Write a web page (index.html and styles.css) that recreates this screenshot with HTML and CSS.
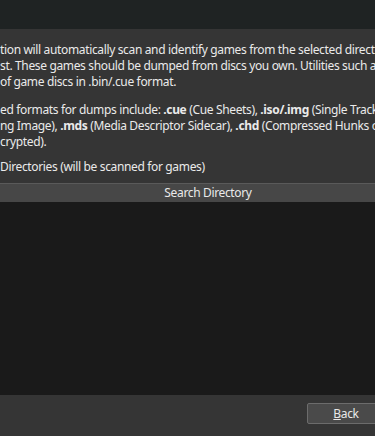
FILE: index.html
```html
<!DOCTYPE html>
<html lang="en">
<head>
  <meta charset="UTF-8" />
  <meta name="viewport" content="width=device-width, initial-scale=1.0" />
  <title>Setup Wizard - Game Directories</title>
  <link rel="stylesheet" href="styles.css">
</head>
<body>
  <div class="titlebar"></div>

  <div class="page">
    <p class="intro">
      <span class="line">tion will automatically scan and identify games from the selected directories below</span>
      <span class="line">st. These games should be dumped from discs you own. Utilities such as ImgBurn</span>
      <span class="line">of game discs in .bin/.cue format.</span>
    </p>

    <p class="intro formats">
      <span class="line">ed formats for dumps include: <b>.cue</b> (Cue Sheets), <b>.iso/.img</b> (Single Track Image)</span>
      <span class="line">ng Image), <b>.mds</b> (Media Descriptor Sidecar), <b>.chd</b> (Compressed Hunks of Data)</span>
      <span class="line">crypted).</span>
    </p>

    <div class="label">Directories (will be scanned for games)</div>

    <div class="dir-list">
      <div class="dir-header">Search Directory</div>
      <div class="dir-body"></div>
    </div>

    <div class="buttons">
      <button class="btn"><u>B</u>ack</button>
    </div>
  </div>
</body>
</html>
```

FILE: styles.css
```css
* {
  margin: 0;
  padding: 0;
  box-sizing: border-box;
}

html, body {
  height: 100%;
  overflow: hidden;
}

body {
  font-family: "Noto Sans", "Open Sans", sans-serif;
  font-size: 12px;
  line-height: 16px;
  letter-spacing: -0.35px;
  color: #eaeaea;
  background-color: #353535;
}

.titlebar {
  height: 29px;
  background-color: #1f2323;
}

.page {
  padding-top: 13px;
}

.intro {
  margin-bottom: 12px;
}

.intro.formats {
  margin-bottom: 9px;
}

.line {
  display: block;
  white-space: nowrap;
  overflow: hidden;
}

.intro b {
  font-weight: 700;
}

.label {
  white-space: nowrap;
  margin-bottom: 8px;
}

.dir-list {
  margin-right: -41px;
}

.dir-header {
  height: 19px;
  line-height: 18px;
  text-align: center;
  background-color: #474747;
  border-top: 1px solid #5a5a5a;
}

.dir-body {
  height: 193px;
  background-color: #1a1a1a;
}

.buttons {
  display: flex;
  justify-content: flex-end;
  padding-top: 8px;
  margin-right: -10px;
}

.btn {
  width: 78px;
  height: 21px;
  font-family: inherit;
  font-size: 12px;
  letter-spacing: inherit;
  color: #e8e8e8;
  background-color: #4a4a4a;
  border: 1px solid #6c6c6c;
  border-radius: 2px;
}

.btn u {
  text-decoration: underline;
}
```
